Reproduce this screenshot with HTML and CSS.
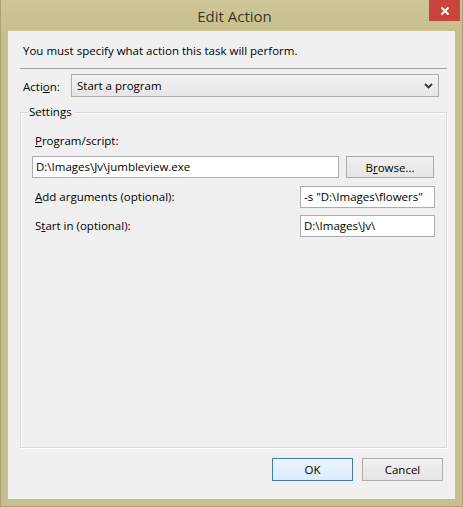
FILE: index.html
```html
<!DOCTYPE html>
<html>
<head>
<meta charset="utf-8">
<title>Edit Action</title>
<link rel="stylesheet" href="styles.css">
</head>
<body>
<div class="window">
  <div class="titlebar">
    <div></div>
    <div class="title">Edit Action</div>
    <div class="close"><svg width="10" height="10" viewBox="0 0 10 10"><path d="M1.5 1.5 L8.5 8.5 M8.5 1.5 L1.5 8.5" stroke="#fff" stroke-width="1.8" fill="none"/></svg></div>
  </div>
  <div class="client">
    <div class="intro">You must specify what action this task will perform.</div>
    <div class="sep"></div>
    <div class="action-row">
      <span class="action-label">Acti<u>o</u>n:</span>
      <div class="combo">
        <span>Start a program</span>
        <svg class="chev" width="9" height="6" viewBox="0 0 9 6"><path d="M1 1 L4.5 4.5 L8 1" stroke="#333" stroke-width="1.8" fill="none"/></svg>
      </div>
    </div>
    <div class="group">
      <span class="group-title">Settings</span>
      <div class="lbl prog-lbl"><u>P</u>rogram/script:</div>
      <div class="prog-row">
        <div class="input prog-input">D:\Images\Jv\jumbleview.exe</div>
        <div class="btn browse">B<u>r</u>owse...</div>
      </div>
      <div class="field-row args-row">
        <span class="lbl"><u>A</u>dd arguments (optional):</span>
        <div class="input small">-s "D:\Images\flowers"</div>
      </div>
      <div class="field-row start-row">
        <span class="lbl">S<u>t</u>art in (optional):</span>
        <div class="input small">D:\Images\Jv\</div>
      </div>
    </div>
    <div class="buttons">
      <div class="btn ok">OK</div>
      <div class="btn cancel">Cancel</div>
    </div>
  </div>
</div>
</body>
</html>
```
FILE: styles.css
```css
* { box-sizing: border-box; }
html, body { margin: 0; padding: 0; }
body {
  width: 463px;
  height: 507px;
  font-family: "Open Sans", "Noto Sans", sans-serif;
  font-size: 11.5px;
  color: #000;
  overflow: hidden;
}
u { text-decoration: underline; text-underline-offset: 1px; }
.window {
  width: 463px;
  height: 507px;
  background: #c8bf8e;
  border: 1px solid #aaa273;
  border-top: none;
  padding: 0 7px 7px 7px;
  display: flex;
  flex-direction: column;
}
.titlebar {
  height: 31px;
  display: grid;
  grid-template-columns: 1fr auto 1fr;
  background: linear-gradient(#cec697, #c8bf8e);
  margin-left: -7px;
  margin-right: -6px;
  padding-left: 7px;
}
.title {
  font-size: 15px;
  color: #3a3828;
  line-height: 32px;
}
.close {
  justify-self: end;
  align-self: start;
  width: 31px;
  height: 21px;
  background: #c8443d;
  display: flex;
  align-items: center;
  justify-content: center;
  margin-right: 1px;
}
.client {
  width: 447px;
  height: 468px;
  background: #f0f0f0;
  display: flex;
  flex-direction: column;
}
.intro {
  margin: 12px 0 0 15px;
  line-height: 16px;
  height: 16px;
}
.sep {
  margin: 9px 8px 0 12px;
  border-top: 1px solid #a3a3a3;
  height: 1px;
}
.action-row {
  margin-top: 5px;
  display: flex;
  align-items: center;
  height: 23px;
}
.action-label {
  margin-left: 15px;
  width: 48px;
  line-height: 16px;
  padding-top: 2px;
}
.combo {
  width: 368px;
  height: 23px;
  border: 1px solid #acacac;
  background: linear-gradient(#f2f2f2, #e6e6e6);
  display: flex;
  align-items: center;
  justify-content: space-between;
  padding: 0 5px 0 5px;
}
.group {
  margin: 15px 8px 0 12px;
  height: 336px;
  border: 1px solid #d8d8d8;
  box-shadow: inset 1px 1px 0 #fff, 1px 1px 0 #fff;
  display: flex;
  flex-direction: column;
  align-items: flex-start;
}
.group-title {
  margin: -9px 0 0 6px;
  padding: 0 2px;
  background: #f0f0f0;
  line-height: 16px;
}
.lbl { line-height: 16px; }
.prog-lbl { margin: 13px 0 0 14px; }
.prog-row {
  margin: 7px 0 0 11px;
  display: flex;
  gap: 7px;
}
.input {
  height: 22px;
  background: #fff;
  border: 1px solid #abadb3;
  line-height: 20px;
  padding: 0 3px;
  white-space: nowrap;
  overflow: hidden;
}
.prog-input { width: 307px; }
.btn {
  height: 22px;
  border: 1px solid #acacac;
  background: linear-gradient(#f0f0f0, #e5e5e5);
  display: flex;
  align-items: center;
  justify-content: center;
}
.browse { width: 88px; }
.field-row {
  display: flex;
  align-items: center;
  justify-content: space-between;
  width: 400px;
  margin-left: 14px;
}
.args-row { margin-top: 8px; }
.start-row { margin-top: 7px; }
.small { width: 135px; }
.buttons {
  margin: 10px 12px 0 0;
  display: flex;
  justify-content: flex-end;
  gap: 9px;
}
.buttons .btn { width: 81px; height: 23px; }
.ok {
  border-color: #3c7fb1;
  background: linear-gradient(#ecf4fc, #dcecfc);
}
```
